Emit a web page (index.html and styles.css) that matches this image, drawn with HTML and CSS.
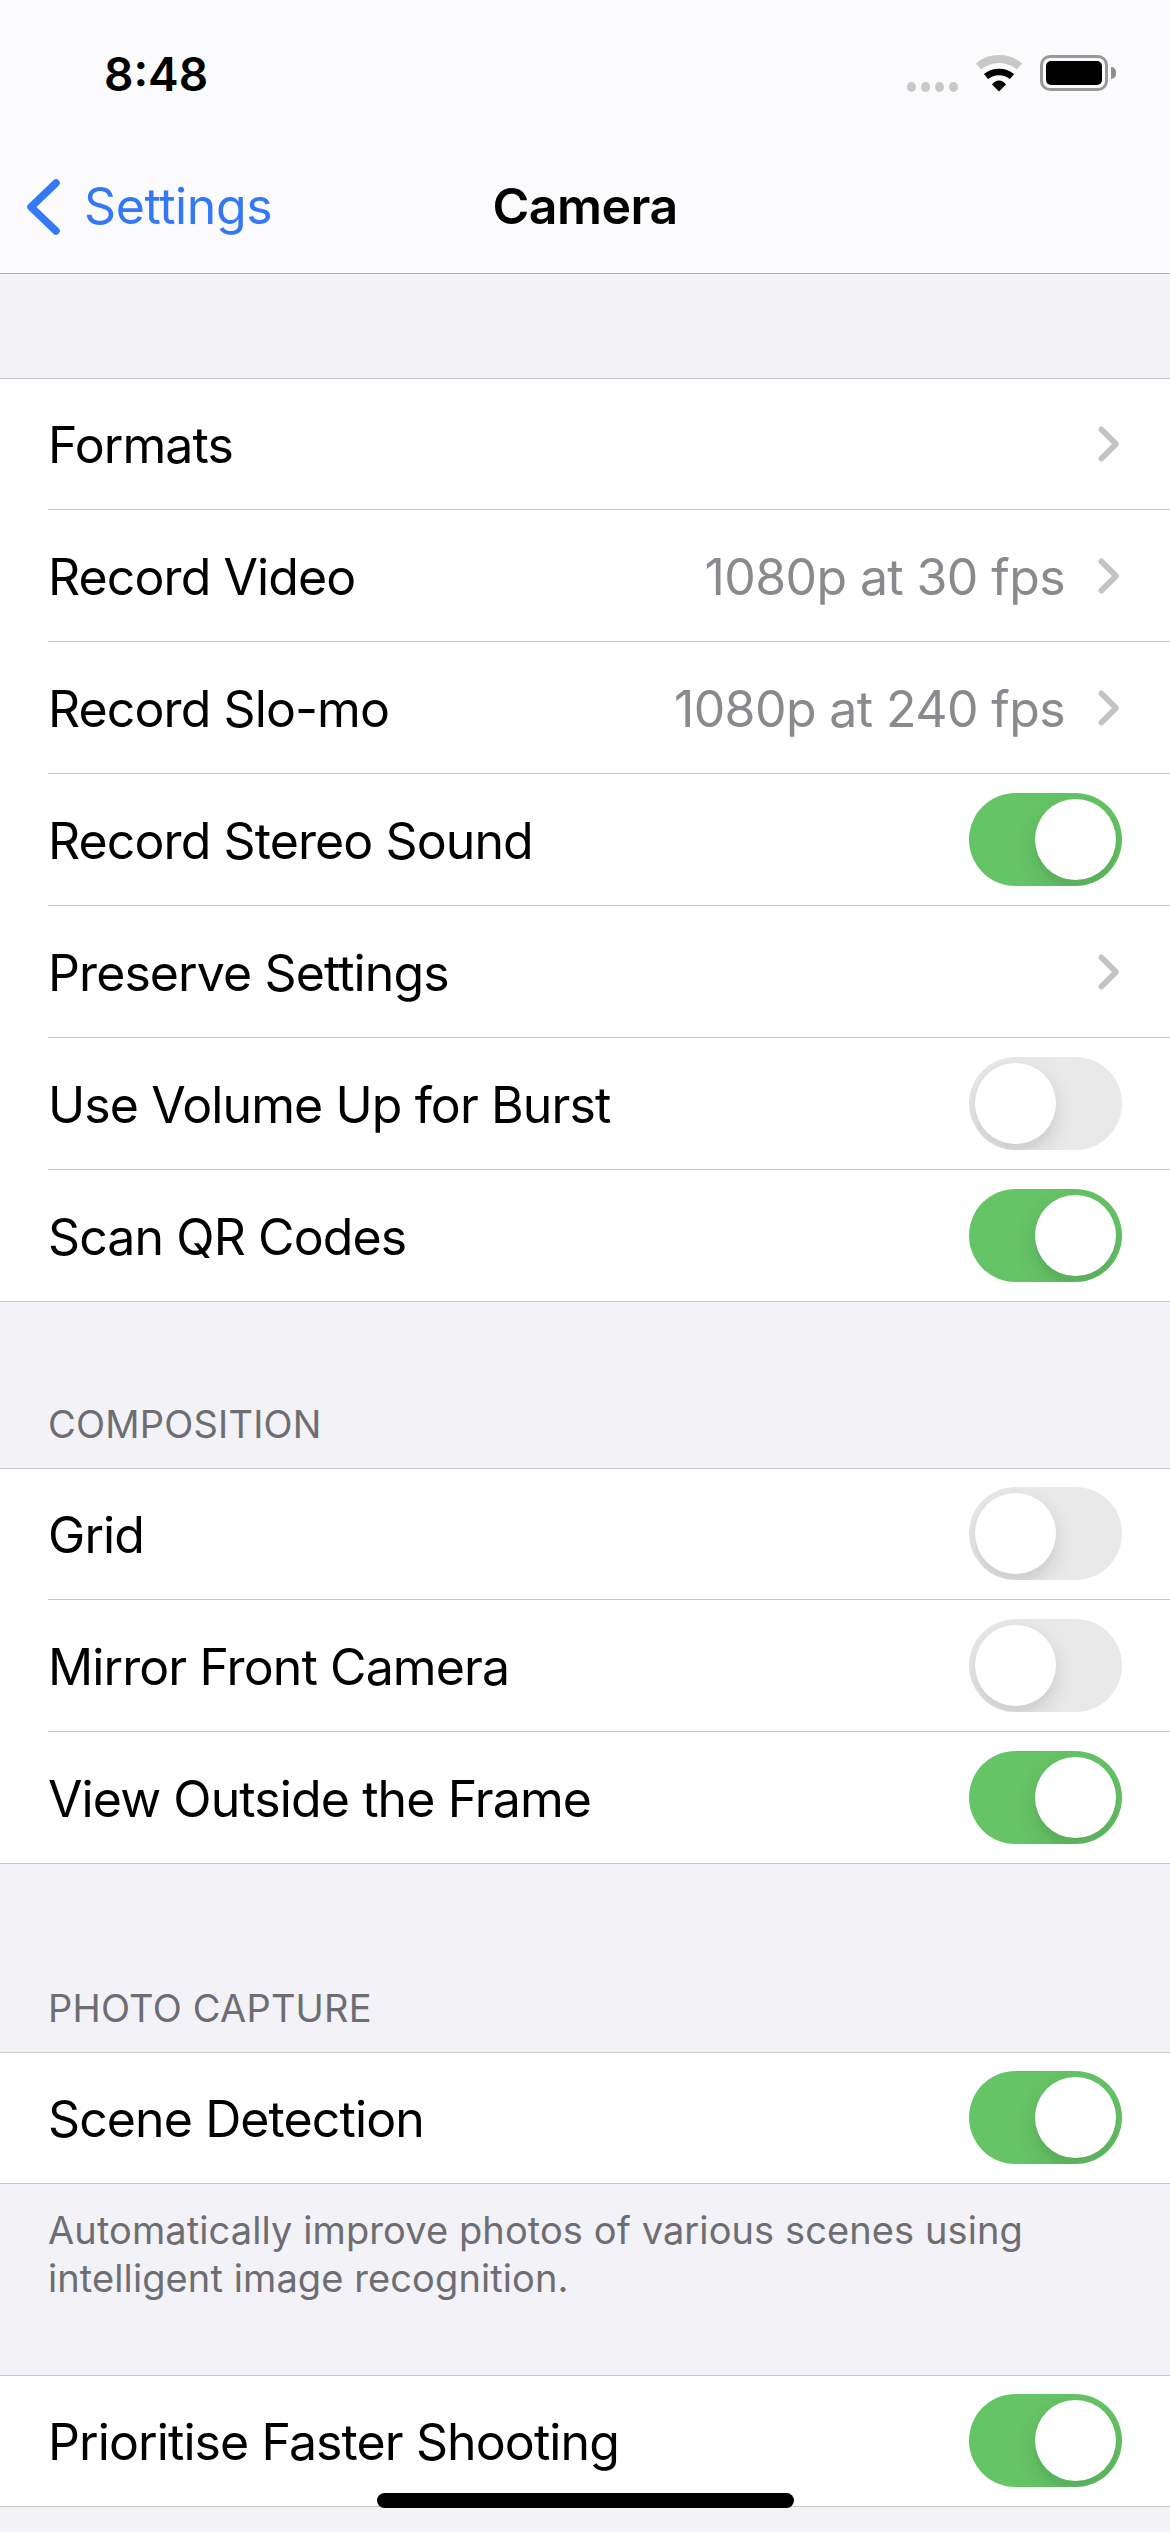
FILE: index.html
```html
<!DOCTYPE html>
<html>
<head>
    <meta charset="utf-8">
    <title>Camera</title>
    <link rel="stylesheet" href="styles.css">
</head>
<body>
    <header class="topbar">
        <div class="status">
            <span class="time">8:48</span>
            <div class="status-icons">
                <div class="dots"><i></i><i></i><i></i><i></i></div>
                <svg class="wifi" width="48" height="37" viewBox="0 0 48 37">
                    <path d="M3.500 11.500C15 1.500 33 1.500 44.500 11.500" fill="none" stroke="#c8c8c8" stroke-width="8"/>
                    <path d="M11 21.500C18.500 15.500 29.500 15.500 37 21.500" fill="none" stroke="#000" stroke-width="6.500"/>
                    <path d="M17 29.500C21 24 27 24 31 29.500L24 36.500Z" fill="#000"/>
                </svg>
                <div class="battery"><div class="battery-fill"></div></div>
                <div class="battery-nub"></div>
            </div>
        </div>
        <nav class="navbar">
            <a class="back">
                <svg width="33" height="56" viewBox="0 0 33 56">
                    <path d="M29 4L4 28L29 52" fill="none" stroke="#3478f6" stroke-width="7.500" stroke-linecap="round" stroke-linejoin="round"/>
                </svg>
                <span>Settings</span>
            </a>
            <h1 class="title">Camera</h1>
        </nav>
    </header>

    <main>
        <section class="group first">
            <div class="row"><div class="row-in"><span class="label">Formats</span><svg class="chev" width="22" height="36" viewBox="0 0 22 36"><path d="M3.500 3.500L18 18L3.500 32.500"/></svg></div></div>
            <div class="row"><div class="row-in"><span class="label">Record Video</span><span class="value">1080p at 30 fps</span><svg class="chev" width="22" height="36" viewBox="0 0 22 36"><path d="M3.500 3.500L18 18L3.500 32.500"/></svg></div></div>
            <div class="row"><div class="row-in"><span class="label">Record Slo-mo</span><span class="value">1080p at 240 fps</span><svg class="chev" width="22" height="36" viewBox="0 0 22 36"><path d="M3.500 3.500L18 18L3.500 32.500"/></svg></div></div>
            <div class="row"><div class="row-in"><span class="label">Record Stereo Sound</span><span class="toggle on"></span></div></div>
            <div class="row"><div class="row-in"><span class="label">Preserve Settings</span><svg class="chev" width="22" height="36" viewBox="0 0 22 36"><path d="M3.500 3.500L18 18L3.500 32.500"/></svg></div></div>
            <div class="row"><div class="row-in"><span class="label">Use Volume Up for Burst</span><span class="toggle"></span></div></div>
            <div class="row"><div class="row-in"><span class="label">Scan QR Codes</span><span class="toggle on"></span></div></div>
        </section>

        <h2 class="section-head comp">COMPOSITION</h2>
        <section class="group">
            <div class="row"><div class="row-in"><span class="label">Grid</span><span class="toggle"></span></div></div>
            <div class="row"><div class="row-in"><span class="label">Mirror Front Camera</span><span class="toggle"></span></div></div>
            <div class="row"><div class="row-in"><span class="label">View Outside the Frame</span><span class="toggle on"></span></div></div>
        </section>

        <h2 class="section-head photo">PHOTO CAPTURE</h2>
        <section class="group">
            <div class="row"><div class="row-in"><span class="label">Scene Detection</span><span class="toggle on"></span></div></div>
        </section>
        <p class="foot">Automatically improve photos of various scenes using intelligent image recognition.</p>

        <section class="group">
            <div class="row"><div class="row-in"><span class="label">Prioritise Faster Shooting</span><span class="toggle on"></span></div></div>
        </section>
    </main>

    <div class="home-bar"></div>
</body>
</html>
```

FILE: styles.css
```css
html, body {
    margin: 0;
    padding: 0;
}
body {
    height: 2532px;
    overflow: hidden;
    position: relative;
    background-color: #f2f2f7;
    font-family: "Inter", "Liberation Sans", sans-serif;
    color: #000;
}

/* top bar */
.topbar {
    background-color: #fbfbfd;
    border-bottom: 1px solid #b2b2b2;
}
.status {
    height: 141px;
    display: flex;
    justify-content: space-between;
    padding: 0 54px 0 104px;
    box-sizing: border-box;
}
.time {
    font-size: 46px;
    font-weight: 600;
    line-height: 50px;
    margin-top: 49px;
}
.status-icons {
    display: flex;
    align-items: flex-start;
    padding-top: 55px;
}
.dots {
    display: flex;
    gap: 5px;
    margin-top: 27px;
    margin-right: 17px;
}
.dots i {
    width: 9px;
    height: 10px;
    border-radius: 50%;
    background-color: #c8c8c8;
}
.wifi {
    margin-right: 17px;
}
.battery {
    width: 68px;
    height: 36px;
    box-sizing: border-box;
    border: 3px solid #999;
    border-radius: 10px;
    padding: 3px;
}
.battery-fill {
    height: 100%;
    background-color: #000;
    border-radius: 5px;
}
.battery-nub {
    width: 5px;
    height: 12px;
    margin: 12px 0 0 3px;
    background-color: #8e8e8e;
    border-radius: 0 6px 6px 0;
}

.navbar {
    height: 132px;
    box-sizing: border-box;
    padding-bottom: 2px;
    display: grid;
    grid-template-columns: 1fr auto 1fr;
    align-items: center;
}
.back {
    margin-left: 27px;
    display: flex;
    align-items: center;
    gap: 24px;
    color: #3478f6;
    font-size: 50px;
    letter-spacing: -0.4px;
}
.back svg {
    margin-top: 2px;
}
.title {
    margin: 0;
    font-size: 50px;
    font-weight: 600;
    letter-spacing: -0.5px;
}

/* lists */
.group {
    background-color: #fff;
    border-top: 1px solid #c6c6c8;
    border-bottom: 1px solid #c6c6c8;
}
.first {
    margin-top: 104px;
}
.row {
    padding-left: 48px;
}
.row:first-child {
    margin-top: -1px;
}
.row-in {
    height: 131px;
    display: flex;
    align-items: center;
    padding-right: 48px;
    border-bottom: 1px solid #c6c6c8;
}
.row:last-child .row-in {
    border-bottom: none;
}
.label {
    font-size: 50px;
    letter-spacing: -0.9px;
    padding-top: 3px;
    flex: 1;
}
.value {
    font-size: 50px;
    letter-spacing: -0.6px;
    padding-top: 3px;
    color: #8a8a8e;
    margin-right: 33px;
}
.chev {
    margin-right: 2px;
}
.chev path {
    fill: none;
    stroke: #c4c4c7;
    stroke-width: 6;
    stroke-linecap: round;
    stroke-linejoin: round;
}

.toggle {
    width: 153px;
    height: 93px;
    border-radius: 47px;
    background-color: #e9e9ea;
    position: relative;
    overflow: hidden;
}
.toggle::after {
    content: "";
    position: absolute;
    top: 6px;
    left: 6px;
    width: 81px;
    height: 81px;
    border-radius: 50%;
    background-color: #fff;
    box-shadow: 0 9px 24px rgba(0, 0, 0, 0.12), 0 9px 3px rgba(0, 0, 0, 0.02);
}
.toggle.on {
    background-color: #65c466;
}
.toggle.on::after {
    left: 66px;
}

.section-head {
    margin: 0;
    padding: 0 48px 21px;
    font-size: 38px;
    font-weight: 400;
    line-height: 46px;
    letter-spacing: 0.2px;
    color: #6d6d72;
}
.comp {
    margin-top: 99px;
}
.photo {
    margin-top: 121px;
}
.foot {
    margin: 0;
    padding: 22px 48px 0;
    height: 191px;
    box-sizing: border-box;
    font-size: 38px;
    line-height: 48px;
    letter-spacing: 0.1px;
    color: #6d6d72;
}

.home-bar {
    position: absolute;
    left: 377px;
    top: 2493px;
    width: 417px;
    height: 15px;
    border-radius: 8px;
    background-color: #000;
}
```
